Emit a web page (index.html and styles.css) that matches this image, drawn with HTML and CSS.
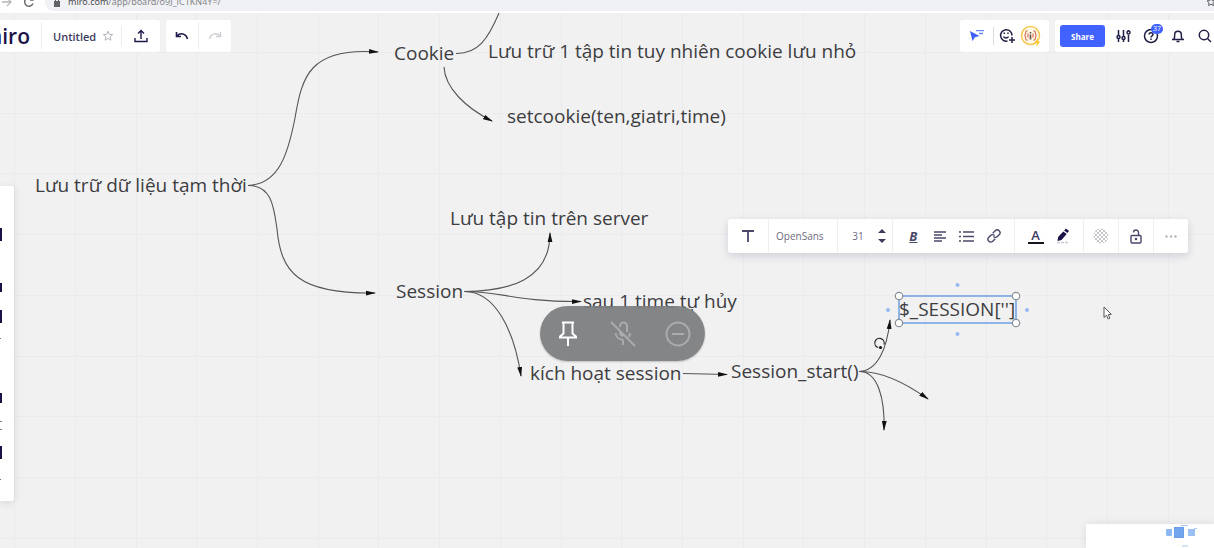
FILE: index.html
```html
<!DOCTYPE html>
<html lang="vi">
<head>
<meta charset="utf-8">
<title>Untitled - Miro</title>
<link rel="stylesheet" href="styles.css">
</head>
<body>
<header class="browser">
  <div class="browser-row">
    <button class="nav" aria-label="Forward"><svg width="12" height="12" viewBox="0 0 12 12" fill="none" stroke="#b5b7ba" stroke-width="1.3"><path d="M1 6h9M6 2l4 4-4 4"/></svg></button>
    <button class="nav" aria-label="Reload"><svg width="12" height="12" viewBox="0 0 12 12" fill="none" stroke="#6b6e72" stroke-width="1.5"><path d="M10 7.500A4.300 4.300 0 1 1 9.500 3.500M10 1v3H7"/></svg></button>
    <div class="omnibox">
      <svg width="6" height="9" viewBox="0 0 6 9"><rect y="3" width="6" height="6" fill="#5f6368"/><path d="M1.500 3V1.500a1.500 1.500 0 0 1 3 0V3" fill="none" stroke="#5f6368"/></svg>
      <span class="url">miro.com<span class="path">/app/board/o9J_lC1KN4Y=/</span></span>
      <svg class="bookmark" width="10" height="10" viewBox="0 0 10 10" fill="none" stroke="#5f6368"><path d="M5 1l1.200 2.600 2.800.3-2.100 1.900.6 2.800L5 7.200 2.500 8.600l.6-2.800L1 3.900l2.800-.3z"/></svg>
    </div>
  </div>
</header>
<main class="board">
  <svg class="canvas" aria-hidden="true">
    <defs>
      <marker id="arrow" viewBox="0 0 10 6" refX="9" refY="3" markerWidth="10" markerHeight="6" markerUnits="userSpaceOnUse" orient="auto"><path d="M0 .6L10 3 0 5.400z" fill="#111"/></marker>
    </defs>
    <g transform="translate(0 -13)" fill="none">
      <path stroke="#eaebec" d="M14.500 13v535M75.500 13v535M136.500 13v535M196.500 13v535M257.500 13v535M318.500 13v535M378.500 13v535M439.500 13v535M500.500 13v535M561.500 13v535M621.500 13v535M682.500 13v535M743.500 13v535M803.500 13v535M864.500 13v535M925.500 13v535M986.500 13v535M1046.500 13v535M1107.500 13v535M1168.500 13v535M0 52.500h1214M0 113.500h1214M0 173.500h1214M0 234.500h1214M0 295.500h1214M0 356.500h1214M0 416.500h1214M0 477.500h1214M0 538.500h1214"/>
      <g stroke="#555" stroke-width="1.100">
        <path d="M248 185.500C279 184 288 154 295 118C302 77 309 47 378 52" marker-end="url(#arrow)"/>
        <path d="M248 185.500C272 185 274 208 277 229C281 272 297 294 375 293" marker-end="url(#arrow)"/>
        <path d="M456 53.500C478 54 488 39 499 13"/>
        <path d="M444 67C445 88 466 108 492 121" marker-end="url(#arrow)"/>
        <path d="M464 291.500C510 291 550 280 550 233" marker-end="url(#arrow)"/>
        <path d="M464 291.500C500 291 515 302 581 301.500" marker-end="url(#arrow)"/>
        <path d="M464 291.500C495 291 514 330 521 376" marker-end="url(#arrow)"/>
        <path d="M683 373.500L727 374.500" marker-end="url(#arrow)"/>
        <path d="M859 371.500C877 371 887 350 890 320" marker-end="url(#arrow)"/>
        <path d="M859 371.500C880 371 904 382 928 399" marker-end="url(#arrow)"/>
        <path d="M859 371.500C878 371 885 399 884 430" marker-end="url(#arrow)"/>
      </g>
      <path d="M878 347.500A4.700 4.700 0 1 1 884 344.500" stroke="#222" stroke-width="1.200"/><circle cx="880.500" cy="347.500" r="1.600" fill="#111"/>
    </g>
  </svg>

  <div class="node n-root">Lưu trữ dữ liệu tạm thời</div>
  <div class="node n-cookie">Cookie</div>
  <div class="node n-file">Lưu trữ 1 tập tin tuy nhiên cookie lưu nhỏ</div>
  <div class="node n-set">setcookie(ten,giatri,time)</div>
  <div class="node n-server">Lưu tập tin trên server</div>
  <div class="node n-session">Session</div>
  <div class="node n-time">sau 1 time tự hủy</div>
  <div class="node n-active">kích hoạt session</div>
  <div class="node n-start">Session_start()</div>
  <div class="node n-var">$_SESSION['']</div>

  <svg class="selection" width="150" height="60" viewBox="0 0 150 60" aria-hidden="true">
    <rect x="17" y="16" width="117" height="27" fill="none" stroke="#5b94e0" stroke-width="1.300"/>
    <g fill="#fff" stroke="#8b8f96" stroke-width="1.200"><circle cx="17" cy="16" r="3.700"/><circle cx="134" cy="16" r="3.700"/><circle cx="17" cy="43" r="3.700"/><circle cx="134" cy="43" r="3.700"/></g>
    <g fill="#98baf0"><circle cx="75.500" cy="5" r="2"/><circle cx="75.500" cy="54" r="2"/><circle cx="6" cy="30" r="2"/><circle cx="145" cy="30" r="2"/></g>
  </svg>
  <svg class="cursor" width="10" height="14" viewBox="0 0 10 14"><path d="M1 1v10.500l2.500-2.200 1.700 3.700 1.700-.8L5.300 8.600l3-.3z" fill="#fff" stroke="#555"/></svg>

  <div class="call-bar">
    <button aria-label="Pin"><svg width="20" height="28" viewBox="0 0 20 28" fill="none" stroke="#fff" stroke-width="2"><path d="M4 2.500h12M5.500 3v10.500L2 16.500v1h16v-1l-3.500-3V3M10 18v8"/></svg></button>
    <button aria-label="Microphone off"><svg width="28" height="28" viewBox="0 0 28 28" fill="none" stroke="#a9abac" stroke-width="2"><path d="M2 2l24 24M11 7V6a3.500 3.500 0 0 1 7 0v6M6.500 13c.5 4 3.500 6.500 7 6.500M14 19.500V25M21 13c0 1.500-.5 3-1.500 4M11 12c0 2 1 3.500 3 4"/></svg></button>
    <button aria-label="Remove"><svg width="28" height="28" viewBox="0 0 28 28" fill="none" stroke="#a9abac" stroke-width="2"><circle cx="14" cy="14" r="11.500"/><path d="M8 14h12"/></svg></button>
  </div>

  <nav class="top-left">
    <div class="bar file-bar">
      <a class="logo" href="#"><span>miro</span></a>
      <button class="title">Untitled</button>
      <button class="star" aria-label="Star"><svg width="12" height="12" viewBox="0 0 12 12" fill="none" stroke="#b5b5bd"><path d="M6 1.200l1.300 3.200 3.400.2-2.600 2.200.8 3.400L6 8.400l-2.900 1.800.8-3.400-2.600-2.200 3.400-.2z"/></svg></button>
      <button class="export" aria-label="Export"><svg width="14" height="14" viewBox="0 0 14 14" fill="none" stroke="#1c1a4a" stroke-width="1.400"><path d="M7 10V2M4 4.500L7 1.500l3 3M1 9v3.500h12V9"/></svg></button>
    </div>
    <div class="bar history-bar">
      <button aria-label="Undo"><svg width="14" height="10" viewBox="0 0 14 10" fill="none" stroke="#1c1a4a" stroke-width="1.600"><path d="M1.500 1v4.500H6M2 5c3-3.500 9-3 10.500 3"/></svg></button>
      <button aria-label="Redo"><svg width="14" height="10" viewBox="0 0 14 10" fill="none" stroke="#cfcfd6" stroke-width="1.400"><path d="M12.500 1v4.500H8M12 5C9 1.500 3 2 1.500 8"/></svg></button>
    </div>
  </nav>

  <nav class="top-right">
    <div class="bar people-bar">
      <button class="follow" aria-label="Cursors"><svg width="16" height="14" viewBox="0 0 16 14"><path d="M1 2l9.500 5-4.500 1.200L3.500 12z" fill="#3f60f0"/><path d="M7 1.700h8M10 4.500h4" stroke="#6a86f3" stroke-width="1.300"/></svg></button>
      <button class="react" aria-label="Reactions"><svg width="17" height="16" viewBox="0 0 17 16" fill="none" stroke="#222046" stroke-width="1.500"><path d="M13 7.500A5.700 5.700 0 1 0 8.500 13M13 9v6M10 12h6M4.500 8.500c1 2 4 2 5 0M5.300 4.500v1.500M9 4.500v1.500"/></svg></button>
      <button class="avatar" aria-label="Profile"><svg width="22" height="22" viewBox="0 0 22 22" fill="none"><circle cx="10.500" cy="10.500" r="9" fill="#fff8e6" stroke="#f6ca58" stroke-width="1.500"/><path d="M7.500 6C4.500 5.500 6.500 10 4.500 10.500 6.500 11 4.500 15.500 7.500 15M13.500 6c3-.5 1 4 3 4.500-2 .5 0 5-3 4.500M8 8.500v4M13 8.500v4" stroke="#d2715b" stroke-width="1.200"/><path d="M10.500 7v1.500M10.500 9.500v5" stroke="#65504a" stroke-width="1.600"/><path d="M18 13l-3.500 5h2.500l-.8 4 4-5.500h-2.500z" fill="#fbc52c"/></svg></button>
    </div>
    <div class="bar share-bar">
      <button class="share">Share</button>
      <button class="tool" aria-label="Settings"><svg width="15" height="14" viewBox="0 0 15 14" fill="none" stroke="#222046" stroke-width="1.500"><path d="M2.500 1v5M2.500 10v3M7.500 1v6M7.500 11v2M12.500 1v1M12.500 6v7"/><circle cx="2.500" cy="8" r="1.500"/><circle cx="7.500" cy="9" r="1.500"/><circle cx="12.500" cy="3.500" r="1.500"/></svg></button>
      <button class="tool help" aria-label="Help"><svg width="16" height="16" viewBox="0 0 16 16" fill="none" stroke="#222046" stroke-width="1.500"><circle cx="8" cy="8" r="6.500"/><path d="M6 6.500C6 4 10 4 10 6.500 10 8 8 7.800 8 9.500M8 10.500V12"/></svg><span class="badge">37</span></button>
      <button class="tool" aria-label="Notifications"><svg width="14" height="14" viewBox="0 0 14 14" fill="none" stroke="#222046" stroke-width="1.500"><path d="M1 10.500h12M3 10c.7-1 .7-2 .7-4.500a3.300 3.300 0 0 1 6.600 0c0 2.500 0 3.500.7 4.500M5.500 12.500h3"/></svg></button>
      <button class="tool" aria-label="Search"><svg width="14" height="14" viewBox="0 0 14 14" fill="none" stroke="#222046" stroke-width="1.500"><circle cx="6" cy="6" r="4.700"/><path d="M9.500 9.500L13 13"/></svg></button>
    </div>
  </nav>

  <aside class="side-tools" aria-label="Tools"><svg width="3" height="315" viewBox="0 0 3 315"><path d="M0 42h2v13H0zM0 97h2v9H0zM0 124h2v13H0zM0 207h2v10H0zM0 260h2v13H0z" fill="#1b1247"/><path d="M0 152h1v1H0zM0 235h2v1H0zM0 243h2v1H0zM0 293h1v1H0z" fill="#777689"/></svg></aside>

  <div class="text-bar" role="toolbar" aria-label="Text">
    <button class="w-type" aria-label="Text type"><svg width="12" height="12" viewBox="0 0 12 12" fill="none" stroke="#4a4868" stroke-width="1.800"><path d="M0 1h12M6 1v11"/></svg></button>
    <select class="font" aria-label="Font"><option>OpenSans</option></select>
    <div class="size"><input type="text" value="31" aria-label="Font size"><div class="steps"><button aria-label="Larger"><svg width="8" height="4"><path d="M0 4l4-4 4 4z" fill="#3d3b5c"/></svg></button><button aria-label="Smaller"><svg width="8" height="4"><path d="M0 0l4 4 4-4z" fill="#3d3b5c"/></svg></button></div></div>
    <div class="group format">
      <button class="bold" aria-label="Bold">B</button>
      <button aria-label="Align"><svg width="13" height="11" viewBox="0 0 13 11" stroke="#4a4868" stroke-width="1.300"><path d="M0 1h12M0 4h8M0 7h12M0 10h8"/></svg></button>
      <button aria-label="List"><svg width="15" height="11" viewBox="0 0 15 11" stroke="#4a4868" stroke-width="1.300"><path d="M0 1h2M4 1h11M0 5.500h2M4 5.500h11M0 10h2M4 10h11"/></svg></button>
      <button aria-label="Link"><svg width="14" height="14" viewBox="0 0 14 14" fill="none" stroke="#4a4868" stroke-width="1.400"><g transform="rotate(-45 7 7)"><path d="M6 9.800H2.500a2.800 2.800 0 0 1 0-5.600H5A2.800 2.800 0 0 1 7.800 7"/><path d="M8 4.200h3.500a2.800 2.800 0 0 1 0 5.600H9A2.800 2.800 0 0 1 6.200 7"/></g></svg></button>
    </div>
    <div class="group color">
      <button class="ink" aria-label="Text color">A</button>
      <button aria-label="Highlight"><svg width="14" height="16" viewBox="0 0 14 16"><path d="M10 .5l3 2.600-1.600 2-3.300-2.600zM7.300 3.500l3.400 2.600L5.500 12l-4 1 .6-4z" fill="#1b1247"/><path d="M1 14.500h11" stroke="#c9c9d0" stroke-width="1.500" stroke-dasharray="3 1"/></svg></button>
    </div>
    <button class="w-cell" aria-label="Opacity"><svg width="16" height="16" viewBox="0 0 16 16"><defs><pattern id="check" width="4" height="4" patternUnits="userSpaceOnUse"><path d="M0 0h2v2H0zM2 2h2v2H2z" fill="#c7c7cb"/></pattern></defs><circle cx="8" cy="8" r="7.500" fill="url(#check)"/></svg></button>
    <button class="w-cell" aria-label="Lock"><svg width="12" height="15" viewBox="0 0 12 15" fill="none" stroke="#4a4868" stroke-width="1.400"><rect x="1" y="6.500" width="10" height="7.500" rx="1"/><path d="M8.500 6.500V3.500a2.500 2.500 0 0 0-5 0"/><circle cx="6" cy="10" r=".6"/></svg></button>
    <button class="w-cell" aria-label="More"><svg width="12" height="3" viewBox="0 0 12 3" fill="#b4b4bc"><circle cx="1.500" cy="1.500" r="1.200"/><circle cx="6" cy="1.500" r="1.200"/><circle cx="10.500" cy="1.500" r="1.200"/></svg></button>
  </div>

  <div class="minimap"><svg width="32" height="24" viewBox="0 0 32 24"><rect x="0" y="5" width="6" height="7" rx="1" fill="#8db8f3"/><rect x="8.500" y="3.500" width="9" height="10" fill="#71a5ee" stroke="#6a9fe8"/><rect x="22" y="5" width="7" height="7" fill="#9bc0f5"/><path d="M15 1.500h7M28 4.500h3M16 22h6" stroke="#a9caf6"/></svg></div>
</main>
</body>
</html>
```

FILE: styles.css
```css
* { box-sizing: border-box; }

body {
  margin: 0;
  height: 100vh;
  display: flex;
  flex-direction: column;
  overflow: hidden;
  font-family: "Open Sans", "Noto Sans", sans-serif;
  color: #3d3d3f;
}

button {
  display: flex;
  align-items: center;
  justify-content: center;
  padding: 0;
  border: 0;
  background: none;
  font: inherit;
  color: inherit;
}

svg { display: block; flex: none; }

/* Browser address row, scrolled partly out of view */
.browser {
  height: 13px;
  flex: none;
  display: flex;
  align-items: flex-end;
  background: #fff;
  border-bottom: 2px solid #fff;
}
.browser-row { flex: 1; display: flex; align-items: center; height: 18px; gap: 10px; }
.nav { width: 12px; }
.browser-row > .nav:first-child { margin-left: 1px; }
.omnibox {
  flex: 1;
  height: 18px;
  padding-left: 9px;
  display: flex;
  align-items: center;
  gap: 8px;
  background: #f0f1f4;
  border-radius: 9px 0 0 9px;
}
.url { font-family: "Noto Sans", sans-serif; font-size: 9px; line-height: 14px; color: #4b4d51; }
.path { color: #85878b; }
.bookmark { margin-left: auto; margin-right: -2px; }

/* Board */
.board { flex: 1; position: relative; overflow: hidden; background: #f1f1f2; }
.canvas { position: absolute; inset: 0; width: 100%; height: 100%; }
.node { position: absolute; font-size: 19px; line-height: 26px; white-space: nowrap; }
.n-root { left: 35px; top: 159px; }
.n-cookie { left: 394px; top: 27px; }
.n-file { left: 488px; top: 25px; }
.n-set { left: 507px; top: 90px; }
.n-server { left: 450px; top: 192px; }
.n-session { left: 396px; top: 265px; }
.n-time { left: 583px; top: 275px; }
.n-active { left: 530px; top: 347px; }
.n-start { left: 731px; top: 345px; }
.n-var { left: 899px; top: 283px; }
.selection { position: absolute; left: 882px; top: 267px; }
.cursor { position: absolute; left: 1103px; top: 293px; }

.call-bar {
  position: absolute;
  left: 540px;
  top: 293px;
  width: 165px;
  height: 55px;
  display: flex;
  border-radius: 28px;
  background: rgba(122, 124, 126, .92);
  box-shadow: 0 1px 2px rgba(0, 0, 0, .2);
}
.call-bar button { flex: 1; }

/* Floating bars */
.top-left, .top-right { position: absolute; top: 7px; display: flex; gap: 6px; }
.top-left { left: 0; }
.top-right { right: 0; }
.bar { height: 32px; display: flex; align-items: center; background: #fff; border-radius: 3px; }
.file-bar { width: 160px; border-radius: 0 3px 3px 0; }
.logo {
  width: 42px;
  height: 26px;
  padding-right: 11px;
  display: flex;
  align-items: center;
  justify-content: flex-end;
  overflow: hidden;
  border-right: 1px solid #ededf0;
  color: #1b1247;
  font-size: 21px;
  font-weight: 600;
  text-decoration: none;
}
.title { margin-left: 11px; font-size: 11px; font-weight: 600; color: #3d3b5c; }
.star { width: 26px; height: 20px; padding-right: 2px; border-right: 1px solid #ededf0; }
.export { flex: 1; }
.history-bar { width: 65px; }
.history-bar button { flex: 1; height: 26px; }
.history-bar button + button { border-left: 1px solid #ededf0; }
.people-bar { width: 89px; }
.follow { width: 34px; height: 18px; border-right: 1px solid #dcdce2; }
.react { width: 26px; }
.avatar { width: 22px; }
.share-bar { width: 159px; padding-left: 5px; border-radius: 3px 0 0 3px; }
.share {
  width: 45px;
  height: 22px;
  flex: none;
  margin-right: 5px;
  border-radius: 3px;
  background: #4262ff;
  color: #fff;
  font-size: 8px;
  font-weight: 700;
}
.tool { width: 27px; height: 32px; flex: none; }
.help { position: relative; }
.badge {
  position: absolute;
  left: 14px;
  top: 4px;
  width: 12px;
  height: 10px;
  border-radius: 5px;
  background: #4262ff;
  color: #fff;
  font-size: 7px;
  line-height: 10px;
}

.side-tools {
  position: absolute;
  left: 0;
  top: 173px;
  width: 14px;
  background: #fff;
  border-radius: 0 3px 3px 0;
  box-shadow: 0 2px 8px rgba(30, 30, 60, .12);
}

.text-bar {
  position: absolute;
  left: 728px;
  top: 206px;
  height: 34px;
  display: flex;
  background: #fff;
  border-radius: 3px;
  box-shadow: 0 3px 9px rgba(30, 30, 60, .15);
}
.text-bar > * + * { border: 0; border-left: 1px solid #efeff2; }
.w-type { width: 40px; }
.font {
  width: 69px;
  padding: 0 0 0 7px;
  appearance: none;
  border-radius: 0;
  background: none;
  font: 10px "Open Sans", sans-serif;
  color: #6d6b80;
}
.size { width: 55px; display: flex; align-items: center; }
.size input {
  width: 40px;
  padding: 0;
  border: 0;
  background: none;
  text-align: center;
  font: 10px "Open Sans", sans-serif;
  color: #6d6b80;
}
.steps { display: flex; flex-direction: column; gap: 6px; }
.group { display: flex; }
.format { width: 122px; padding: 0 7px; }
.color { width: 69px; padding: 0 7px; }
.group button { flex: 1; }
.w-cell { width: 35px; }
.bold { font-size: 13px; font-weight: 700; font-style: italic; text-decoration: underline; color: #4a4868; }
.text-bar .ink {
  height: 16px;
  align-self: center;
  padding-bottom: 3px;
  background: linear-gradient(#16151f, #16151f) center bottom / 16px 2px no-repeat;
  color: #3d3b5c;
  font-size: 13px;
  font-weight: 600;
  line-height: 12px;
}

.minimap {
  position: absolute;
  right: 0;
  bottom: 0;
  width: 128px;
  height: 24px;
  padding-right: 16px;
  display: flex;
  justify-content: flex-end;
  background: #fff;
  box-shadow: 0 0 8px rgba(30, 30, 60, .1);
}
```
